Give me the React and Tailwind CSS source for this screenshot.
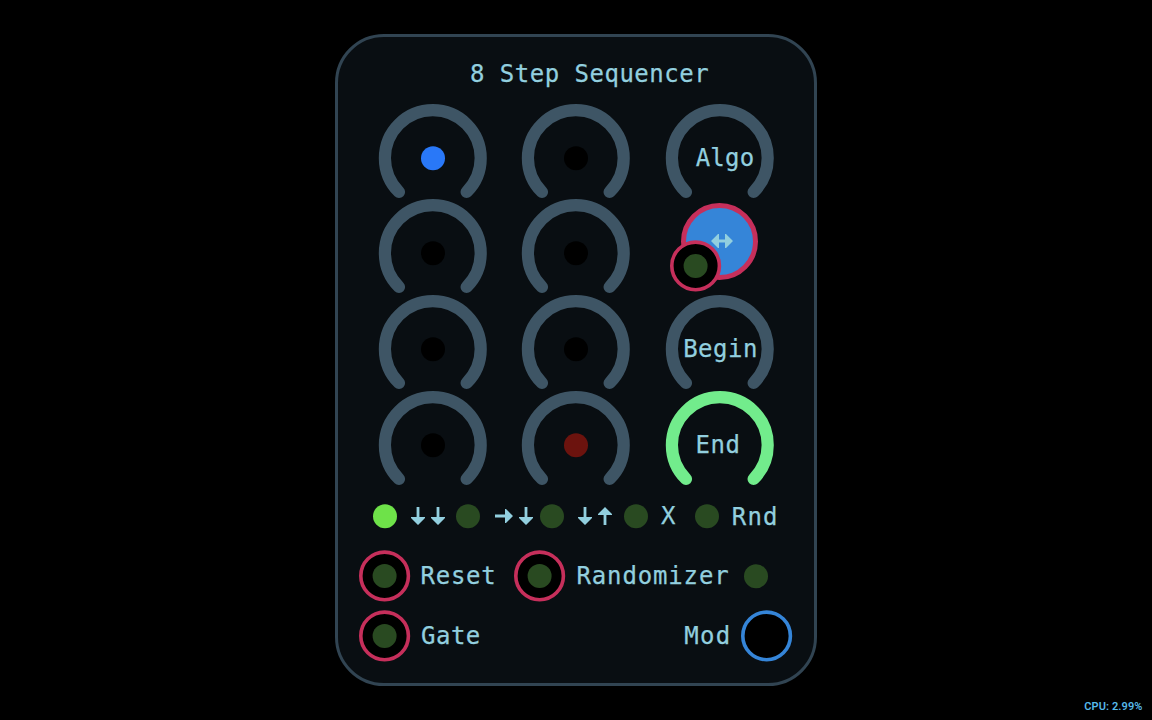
const dark = 'text-[#3e5565]';

function Knob({ tone = dark, children }) {
  return (
    <div className="relative flex h-[95.67px] items-center justify-center">
      <svg className={`h-[108px] w-[108px] shrink-0 overflow-visible ${tone}`} viewBox="0 0 108 108" fill="none">
        <path d="M20 88A47.9 47.9 0 1 1 87.6 88" stroke="currentColor" strokeWidth="12.2" strokeLinecap="round" />
      </svg>
      <div className="absolute inset-0 flex items-center justify-center">{children}</div>
    </div>
  );
}

function Led({ color = 'text-[#294a21]' }) {
  return (
    <svg className={`h-6 w-6 shrink-0 overflow-visible ${color}`} viewBox="0 0 24 24" fill="currentColor">
      <circle cx="12" cy="12.3" r="12" />
    </svg>
  );
}

function Jack({ tone = 'text-[#c62f5b]', led = true }) {
  return (
    <svg className={`h-[51px] w-[51px] shrink-0 overflow-visible ${tone}`} viewBox="0 0 51 51">
      <circle cx="25.6" cy="25.9" r="23.8" fill="#000" stroke="currentColor" strokeWidth="3.6" />
      {led && <circle cx="25.6" cy="25.9" r="12" fill="#294a21" />}
    </svg>
  );
}

function Down({ className = '' }) {
  return (
    <svg className={`h-[18px] w-[14px] shrink-0 ${className}`} viewBox="0 0 14 18" fill="currentColor">
      <path d="M5.6 0H8.4V10H14V11L7 18L0 11V10H5.6Z" />
    </svg>
  );
}

function Right() {
  return (
    <svg className="h-[14px] w-[18px] shrink-0" viewBox="0 0 18 14" fill="currentColor">
      <path d="M0 5.6H10V0H11L18 7L11 14H10V8.4H0Z" />
    </svg>
  );
}

export default function App() {
  return (
    <main className="relative flex h-[720px] w-[1152px] justify-center overflow-hidden bg-black pt-[34px] font-['DejaVu_Sans_Mono',monospace] text-[24px] leading-6 tracking-[0.5px] text-[#92cfdf] [-webkit-text-stroke:0.25px_#92cfdf]">
      <section className="flex h-[652px] w-[482px] shrink-0 flex-col rounded-[49px] border-[3px] border-[#314452] bg-[#090e12] px-[20.5px]">
        <h1 className="flex h-[73px] items-center justify-center whitespace-pre pl-[27px] pt-[1px]">8 Step Sequencer</h1>

        <div className="grid w-[430.5px] grid-cols-3 self-center">
          <Knob><Led color="text-[#2978f8]" /></Knob>
          <Knob><Led color="text-black" /></Knob>
          <Knob><span className="pl-[11px] tracking-[0.2px]">Algo</span></Knob>
          <Knob><Led color="text-black" /></Knob>
          <Knob><Led color="text-black" /></Knob>
          <div className="relative flex h-[95.67px] justify-center">
            <div className="-mt-[2.5px] flex h-[77px] w-[77px] items-center justify-center rounded-full border-[5px] border-[#c62f5b] bg-[#3585d8] pl-[4px]">
              <svg className="h-[14px] w-[22px] shrink-0 overflow-visible" viewBox="0 0 22 14" fill="currentColor">
                <path d="M0 6L7 -1H8V4.6H14V-1H15L22 6L15 13H14V7.4H8V13H7Z" />
              </svg>
            </div>
            <div className="absolute left-[22.25px] top-[34.1px]"><Jack /></div>
          </div>
          <Knob><Led color="text-black" /></Knob>
          <Knob><Led color="text-black" /></Knob>
          <Knob><span className="pl-[2px]">Begin</span></Knob>
          <Knob><Led color="text-black" /></Knob>
          <Knob><Led color="text-[#6c130e]" /></Knob>
          <Knob tone="text-[#72ec8c]"><span className="-ml-[3px]">End</span></Knob>
        </div>

        <div className="flex h-[47px] items-center pl-[14px]">
          <div className="flex w-[83.7px] items-center">
            <Led color="text-[#6ee249]" />
            <Down className="ml-[14.5px]" />
            <Down className="ml-[5.7px]" />
          </div>
          <div className="flex w-[83.7px] items-center">
            <Led />
            <span className="ml-[15px] flex items-center"><Right /></span>
            <Down className="ml-[6px]" />
          </div>
          <div className="flex w-[83.7px] items-center">
            <Led />
            <Down className="ml-[14.5px]" />
            <Down className="ml-[5.7px] rotate-180" />
          </div>
          <div className="flex w-[71.8px] items-center">
            <Led />
            <span className="ml-[13.5px]">X</span>
          </div>
          <Led />
          <span className="ml-[12.5px] mt-px tracking-[1.1px]">Rnd</span>
        </div>

        <div className="mt-[6px] flex h-[60px] items-center">
          <Jack />
          <span className="ml-[11px] w-[93.5px] tracking-[0.75px]">Reset</span>
          <Jack />
          <span className="ml-[11.5px] w-[167px] tracking-[0.85px]">Randomizer</span>
          <Led />
        </div>

        <div className="flex h-[60px] items-center justify-between pr-[1.5px]">
          <div className="flex items-center gap-[11.5px]"><Jack /><span>Gate</span></div>
          <div className="flex items-center gap-[9.5px]"><span className="tracking-[1.3px]">Mod</span><Jack tone="text-[#3585d8]" led={false} /></div>
        </div>
      </section>
      <footer className="absolute bottom-[5.5px] right-[9.5px] font-['Roboto',sans-serif] text-[11px] font-semibold leading-4 tracking-[0.1px] text-[#57b9e9] [-webkit-text-stroke:0]">CPU: 2.99%</footer>
    </main>
  );
}
